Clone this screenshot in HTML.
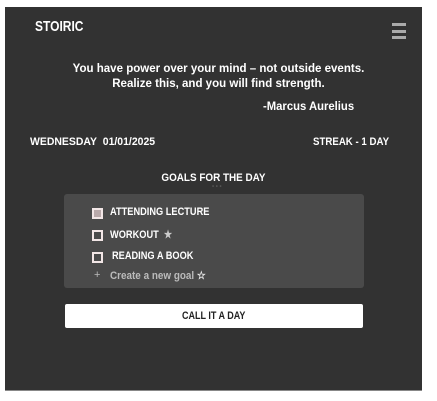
<!DOCTYPE html>
<html><head><meta charset="utf-8"><style>
*{margin:0;padding:0;box-sizing:border-box}
body{width:437px;height:401px;background:#fff;position:relative;overflow:hidden;font-family:"Liberation Sans",sans-serif;font-weight:bold;color:#fff}
.frame{position:absolute;left:5px;top:7px;width:417px;height:384px;background:#323232;border-bottom:1px solid #888}
.a{position:absolute;white-space:nowrap;transform-origin:0 0}
.logo{left:35px;top:18px;font-size:15px;transform:scaleX(0.8)}
.ham{position:absolute;left:392px;width:14px;height:3px;background:#aaa}
.q{left:0;width:437px;text-align:center;font-size:12px;transform-origin:218px 0;transform:scaleX(0.96)}
.panel{position:absolute;left:64px;top:194px;width:300px;height:94px;background:#4a4a4a;border-radius:3px}
.cb{position:absolute;left:92px;width:11px;height:11px;border:2px solid #f2e6e6}
.g{left:110px;font-size:11px;transform:scaleX(0.84)}
.btn{position:absolute;left:65px;top:304px;width:298px;height:24px;background:#fff;border-radius:2px;color:#222;font-size:11px;text-align:center;line-height:25px}
.btn span{display:inline-block;transform:scaleX(0.82)}
</style></head><body>
<div class="frame"></div>
<div class="a logo">STOIRIC</div>
<div class="ham" style="top:23px"></div><div class="ham" style="top:30px"></div><div class="ham" style="top:36px"></div>
<div class="a q" style="top:61px">You have power over your mind – not outside events.</div>
<div class="a q" style="top:76px">Realize this, and you will find strength.</div>
<div class="a" style="left:263px;top:99px;font-size:12px;transform:scaleX(0.94)">-Marcus Aurelius</div>
<div class="a" style="left:30px;top:136px;font-size:11px;transform:scaleX(0.95)">WEDNESDAY&nbsp; 01/01/2025</div>
<div class="a" style="left:313px;top:136px;font-size:11px;transform:scaleX(0.88)">STREAK - 1 DAY</div>
<div class="a" style="left:0;width:427px;text-align:center;top:172px;font-size:11px;transform-origin:213px 0;transform:scaleX(0.9)">GOALS FOR THE DAY</div>
<div class="a" style="left:212px;top:184px;font-size:6px;color:#555">• • •</div>
<div class="panel"></div>
<div class="cb" style="top:208px;background:#b9a9aa"></div>
<div class="a g" style="top:206px">ATTENDING LECTURE</div>
<div class="cb" style="top:230px"></div>
<div class="a g" style="top:228px">WORKOUT&nbsp; <span style="color:#ccc">★</span></div>
<div class="cb" style="top:252px"></div>
<div class="a g" style="top:250px;left:112px">READING A BOOK</div>
<div class="a" style="left:94px;top:269px;font-size:11px;color:#bbb;font-weight:normal">+</div>
<div class="a" style="left:110px;top:269px;font-size:11px;color:#bbb;transform:scaleX(0.9)">Create a new goal <span style="color:#eee">☆</span></div>
<div class="btn"><span>CALL IT A DAY</span></div>
</body></html>
